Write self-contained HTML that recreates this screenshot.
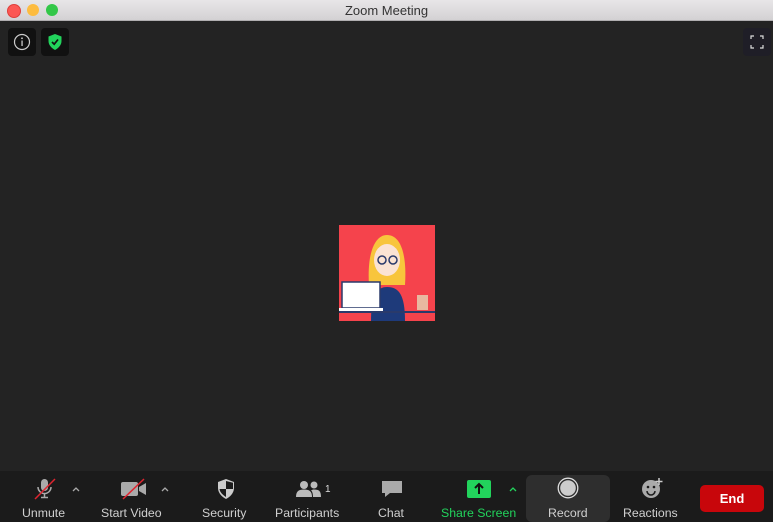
<!DOCTYPE html>
<html><head><style>
body{margin:0;width:773px;height:522px;overflow:hidden;background:#232323;font-family:"Liberation Sans",sans-serif;position:relative}
.title{position:absolute;left:0;top:0;width:773px;height:20px;background:linear-gradient(#e8e6e8,#d3d1d3);border-bottom:1px solid #b0aeb0;text-align:center;font-size:13px;line-height:21px;color:#333}
.dot{position:absolute;top:4px;width:12px;height:12px;border-radius:50%}
.tb{position:absolute;left:0;top:471px;width:773px;height:51px;background:#1b1b1b}
.lbl{position:absolute;top:506px;font-size:12.3px;color:#d0d0d0;white-space:nowrap}
.caret{position:absolute;top:487px}
</style></head><body>
<div class="title">Zoom Meeting
<div class="dot" style="left:7px;background:#fc5753;border:0.5px solid #de3f3b"></div>
<div class="dot" style="left:27px;background:#fdbc40"></div>
<div class="dot" style="left:46px;background:#33c748"></div>
</div>
<div style="position:absolute;left:8px;top:28px;width:28px;height:28px;background:#111;border-radius:4px"></div>
<svg style="position:absolute;left:13px;top:33px" width="18" height="18"><circle cx="9" cy="9" r="7.5" fill="none" stroke="#ccc" stroke-width="1.2"/><rect x="8.4" y="7.5" width="1.3" height="5.5" fill="#ccc"/><circle cx="9" cy="5.3" r="0.9" fill="#ccc"/></svg>
<div style="position:absolute;left:41px;top:28px;width:28px;height:28px;background:#111;border-radius:4px"></div>
<svg style="position:absolute;left:47px;top:33px" width="16" height="18"><path d="M8 1 L14.5 3.5 V8 C14.5 12 11.5 15 8 17 C4.5 15 1.5 12 1.5 8 V3.5 Z" fill="#22d35c"/><path d="M5 9 L7.2 11.2 L11 6.5" stroke="#111" stroke-width="1.7" fill="none"/></svg>
<div style="position:absolute;left:743px;top:28px;width:28px;height:28px;background:#1f1e27;border-radius:4px"></div>
<svg style="position:absolute;left:750px;top:35px" width="14" height="14" fill="none" stroke="#ddd" stroke-width="1.2"><path d="M1 4V1h3M10 1h3v3M13 10v3h-3M4 13H1v-3"/></svg>

<div style="position:absolute;left:339px;top:225px;width:96px;height:96px;background:#f5434c;overflow:hidden">
<svg width="96" height="96"><path d="M30 60 C28 30 35 10 48 10 C62 10 68 30 66 60Z" fill="#f8c53c"/><ellipse cx="48" cy="35" rx="13" ry="16" fill="#fbe3d3"/><circle cx="43" cy="35" r="4" fill="none" stroke="#2a3a6b" stroke-width="1.5"/><circle cx="54" cy="35" r="4" fill="none" stroke="#2a3a6b" stroke-width="1.5"/><path d="M32 96 C32 70 38 62 48 62 C60 62 66 70 66 96Z" fill="#1e3a7a"/><rect x="3" y="57" width="38" height="26" fill="#fff" stroke="#2a3a6b" stroke-width="1.5"/><rect x="0" y="83" width="44" height="3" fill="#fff"/><rect x="78" y="70" width="11" height="15" fill="#e8b8a0"/><rect x="0" y="86" width="96" height="2" fill="#2a3a6b"/></svg>
</div>

<div class="tb"></div>
<div style="position:absolute;left:526px;top:475px;width:84px;height:47px;background:#2e2e2e;border-radius:6px"></div>

<svg style="position:absolute;left:33px;top:478px" width="24" height="22"><rect x="8" y="1" width="7" height="12" rx="3.5" fill="#aaa"/><path d="M5 9a6.5 6.5 0 0 0 13 0" stroke="#aaa" stroke-width="1.5" fill="none"/><path d="M11.5 15.5V19M8 19.5h7" stroke="#aaa" stroke-width="1.5"/><path d="M2 21L22 1" stroke="#e0242f" stroke-width="1.5"/></svg>
<svg class="caret" style="left:72px" width="8" height="5"><path d="M1 4l3-3 3 3" stroke="#aaa" stroke-width="1.3" fill="none"/></svg>
<div class="lbl" style="left:22px">Unmute</div>

<svg style="position:absolute;left:120px;top:478px" width="28" height="22"><rect x="1" y="4" width="17" height="14" rx="2" fill="#aaa"/><path d="M19 9l7-4v12l-7-4z" fill="#aaa"/><path d="M3 21L24 1" stroke="#e0242f" stroke-width="1.5"/></svg>
<svg class="caret" style="left:161px" width="8" height="5"><path d="M1 4l3-3 3 3" stroke="#aaa" stroke-width="1.3" fill="none"/></svg>
<div class="lbl" style="left:101px">Start Video</div>

<svg style="position:absolute;left:216px;top:478px" width="20" height="22"><path d="M10 1L18 4V10C18 15 14 19 10 21C6 19 2 15 2 10V4Z" fill="#ccc"/><path d="M10 3V11H17V10V4.8ZM10 11V19C7 17 4 14.5 3.5 11Z" fill="#1b1b1b"/></svg>
<div class="lbl" style="left:202px">Security</div>

<svg style="position:absolute;left:296px;top:480px" width="26" height="18" fill="#bbb"><circle cx="8" cy="5" r="4"/><circle cx="18" cy="5" r="3.5"/><path d="M0 17C0 11 3 9.5 8 9.5S16 11 16 17Z"/><path d="M17 17C17 13 16 11 15 10.5C16 9.8 17 9.5 18 9.5C23 9.5 25 11 25 17Z"/></svg>
<div style="position:absolute;left:325px;top:484px;font-size:10px;color:#ddd">1</div>
<div class="lbl" style="left:275px">Participants</div>

<svg style="position:absolute;left:381px;top:479px" width="22" height="20"><path d="M1 2h20v12H9l-5 4v-4H1z" fill="#aaa"/></svg>
<div class="lbl" style="left:378px">Chat</div>

<div style="position:absolute;left:467px;top:480px;width:24px;height:18px;background:#22d35c;border-radius:2px"></div>
<svg style="position:absolute;left:473px;top:482px" width="12" height="14"><path d="M6 12V3M2 6l4-4 4 4" stroke="#111" stroke-width="2" fill="none"/></svg>
<svg class="caret" style="left:509px" width="8" height="5"><path d="M1 4l3-3 3 3" stroke="#22d35c" stroke-width="1.3" fill="none"/></svg>
<div class="lbl" style="left:441px;color:#22d35c">Share Screen</div>

<svg style="position:absolute;left:557px;top:477px" width="22" height="22"><circle cx="11" cy="11" r="9.8" fill="none" stroke="#ddd" stroke-width="1.3"/><circle cx="11" cy="11" r="7.8" fill="#ccc"/></svg>
<div class="lbl" style="left:548px">Record</div>

<svg style="position:absolute;left:640px;top:477px" width="24" height="22"><circle cx="11" cy="12" r="9" fill="#aaa"/><circle cx="8" cy="10" r="1.3" fill="#1b1b1b"/><circle cx="14" cy="10" r="1.3" fill="#1b1b1b"/><path d="M7 14a4 4 0 0 0 8 0" stroke="#1b1b1b" stroke-width="1.5" fill="none"/><path d="M19 1v7M15.5 4.5h7" stroke="#ccc" stroke-width="1.5"/></svg>
<div class="lbl" style="left:623px">Reactions</div>

<div style="position:absolute;left:700px;top:485px;width:64px;height:27px;background:#c8060b;border-radius:5px;color:#fff;font-weight:bold;font-size:13px;text-align:center;line-height:27px">End</div>
</body></html>
